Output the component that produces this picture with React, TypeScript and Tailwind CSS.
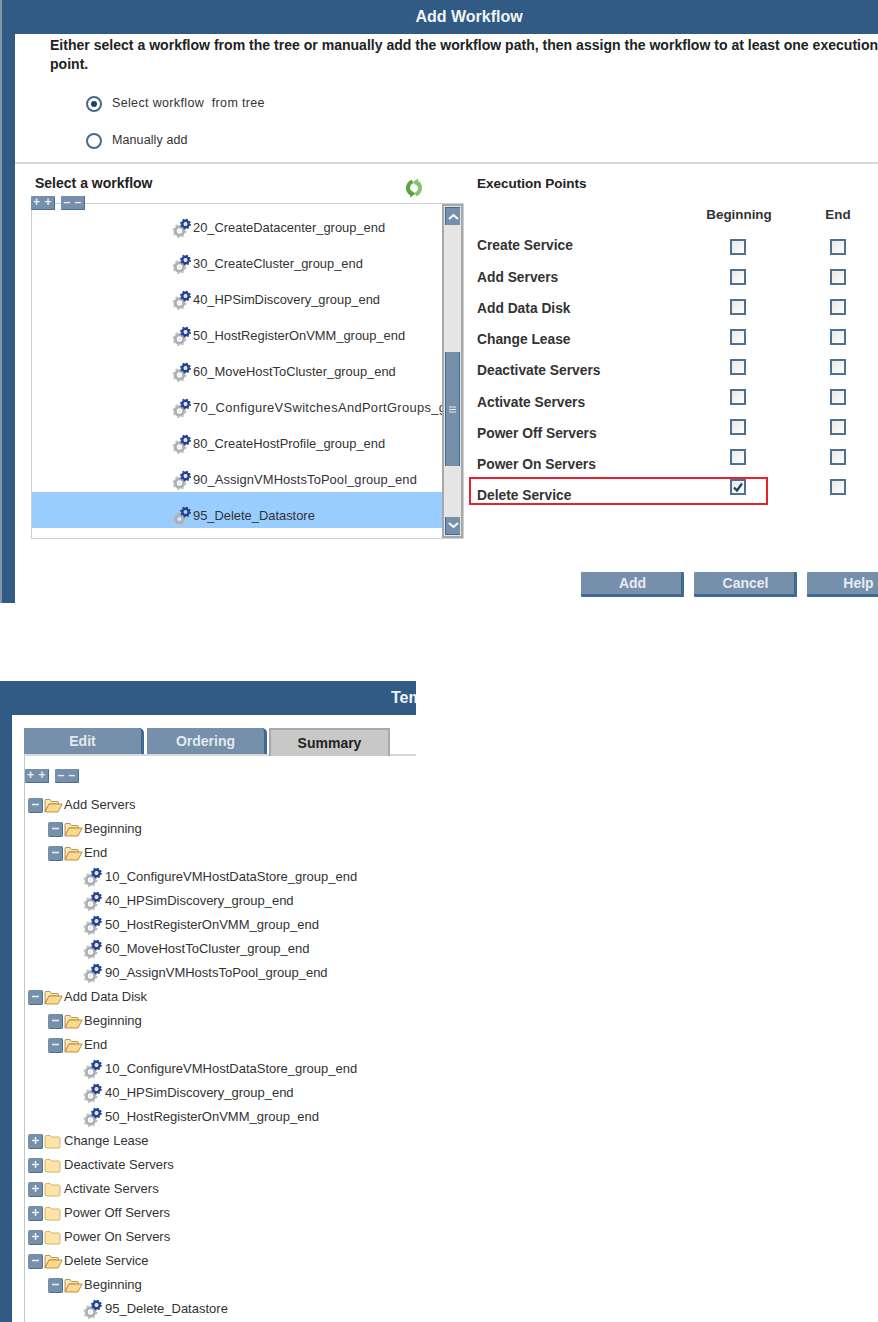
import React from "react";

const workflows = [
  "20_CreateDatacenter_group_end",
  "30_CreateCluster_group_end",
  "40_HPSimDiscovery_group_end",
  "50_HostRegisterOnVMM_group_end",
  "60_MoveHostToCluster_group_end",
  "70_ConfigureVSwitchesAndPortGroups_group_end",
  "80_CreateHostProfile_group_end",
  "90_AssignVMHostsToPool_group_end",
  "95_Delete_Datastore",
];

const points = [
  "Create Service",
  "Add Servers",
  "Add Data Disk",
  "Change Lease",
  "Deactivate Servers",
  "Activate Servers",
  "Power Off Servers",
  "Power On Servers",
  "Delete Service",
];

type TreeRow = { kind: "open" | "closed" | "leaf"; level: 0 | 1 | 2; label: string };
const tree: TreeRow[] = [
  { kind: "open", level: 0, label: "Add Servers" },
  { kind: "open", level: 1, label: "Beginning" },
  { kind: "open", level: 1, label: "End" },
  { kind: "leaf", level: 2, label: "10_ConfigureVMHostDataStore_group_end" },
  { kind: "leaf", level: 2, label: "40_HPSimDiscovery_group_end" },
  { kind: "leaf", level: 2, label: "50_HostRegisterOnVMM_group_end" },
  { kind: "leaf", level: 2, label: "60_MoveHostToCluster_group_end" },
  { kind: "leaf", level: 2, label: "90_AssignVMHostsToPool_group_end" },
  { kind: "open", level: 0, label: "Add Data Disk" },
  { kind: "open", level: 1, label: "Beginning" },
  { kind: "open", level: 1, label: "End" },
  { kind: "leaf", level: 2, label: "10_ConfigureVMHostDataStore_group_end" },
  { kind: "leaf", level: 2, label: "40_HPSimDiscovery_group_end" },
  { kind: "leaf", level: 2, label: "50_HostRegisterOnVMM_group_end" },
  { kind: "closed", level: 0, label: "Change Lease" },
  { kind: "closed", level: 0, label: "Deactivate Servers" },
  { kind: "closed", level: 0, label: "Activate Servers" },
  { kind: "closed", level: 0, label: "Power Off Servers" },
  { kind: "closed", level: 0, label: "Power On Servers" },
  { kind: "open", level: 0, label: "Delete Service" },
  { kind: "open", level: 1, label: "Beginning" },
  { kind: "leaf", level: 2, label: "95_Delete_Datastore" },
];

function Gear() {
  return (
    <svg width="20" height="20" viewBox="0 0 20 20" className="shrink-0">
      <circle cx="7.5" cy="13" r="4.2" fill="none" stroke="#adb0b3" strokeWidth="3" />
      <circle cx="7.5" cy="13" r="6" fill="none" stroke="#bfc1c4" strokeWidth="2" strokeDasharray="2.2 2.5" />
      <circle cx="7.5" cy="13" r="1.6" fill="#eceded" />
      <circle cx="13.5" cy="6" r="3.2" fill="none" stroke="#23408f" strokeWidth="2.4" />
      <circle cx="13.5" cy="6" r="4.6" fill="none" stroke="#23408f" strokeWidth="1.6" strokeDasharray="1.8 1.8" />
      <circle cx="13.5" cy="6" r="1.1" fill="#c8d2ea" />
    </svg>
  );
}

function FolderOpen() {
  return (
    <svg width="19" height="15" viewBox="0 0 19 15" className="shrink-0">
      <path d="M1 13.5V2.5Q1 1.5 2 1.5H6L7.5 3.5H13.5Q14.5 3.5 14.5 4.5V6H5L1 13.5Z" fill="#fbe6ad" stroke="#b08a42" strokeWidth="0.9" />
      <path d="M1 14L5 6H18.2L14 14H1Z" fill="#fdd98c" stroke="#b08a42" strokeWidth="0.9" />
    </svg>
  );
}

function FolderClosed() {
  return (
    <svg width="17" height="15" viewBox="0 0 17 15" className="shrink-0">
      <path d="M1 3Q1 1.5 2.5 1.5H6L7.5 3H14.5Q16 3 16 4.5V12.5Q16 14 14.5 14H2.5Q1 14 1 12.5V3Z" fill="#fde3a4" stroke="#cda960" strokeWidth="0.9" />
    </svg>
  );
}

function Toggle({ open }: { open: boolean }) {
  return (
    <span className="w-[15px] h-[15px] shrink-0 rounded-[2px] bg-[#7690ab] border-r border-b border-[#4a6f94] flex items-center justify-center">
      <svg width="9" height="9" viewBox="0 0 9 9">
        <path d={open ? "M1 4.5H8" : "M1 4.5H8M4.5 1V8"} stroke="#e8edf2" strokeWidth="1.6" />
      </svg>
    </span>
  );
}

function ExpandButtons() {
  return (
    <div className="flex gap-[6px]">
      {["+ +", "– –"].map((s) => (
        <span
          key={s}
          className="w-[24px] h-[14px] rounded-[1px] bg-[#7690ab] border-r border-b border-[#4a6f94] text-[#e8edf2] text-[12px] font-bold leading-[12px] tracking-[0.5px] text-center"
        >
          {s}
        </span>
      ))}
    </div>
  );
}

function Refresh() {
  return (
    <svg width="20" height="20" viewBox="0 0 20 20">
      <path d="M8.5 3.5A7 7 0 0 0 6.5 15.5" fill="none" stroke="#58a63e" strokeWidth="3.8" />
      <path d="M6 11.5V19.5L11.5 15.8Z" fill="#58a63e" />
      <path d="M11.5 16.5A7 7 0 0 0 13.5 4.5" fill="none" stroke="#86c46a" strokeWidth="3.8" />
      <path d="M14 8.5V0.5L8.5 4.2Z" fill="#86c46a" />
    </svg>
  );
}

function Radio({ checked }: { checked?: boolean }) {
  return (
    <span className="w-[16px] h-[16px] rounded-full border-2 border-[#48698c] bg-white flex items-center justify-center shrink-0">
      {checked && <span className="w-[6px] h-[6px] rounded-full bg-[#1f3f66]" />}
    </span>
  );
}

function Checkbox({ checked }: { checked?: boolean }) {
  return (
    <span className="w-[16px] h-[16px] shrink-0 border-2 border-[#4f6f90] bg-gradient-to-br from-[#e8e8e8] to-white flex items-center justify-center">
      {checked && (
        <svg width="12" height="12" viewBox="0 0 12 12">
          <path d="M2 6.5L5 9.5L10 2.5" fill="none" stroke="#1d3f66" strokeWidth="2.2" />
        </svg>
      )}
    </span>
  );
}

function ActionButton({ label }: { label: string }) {
  return (
    <span className="w-[103px] h-[25px] shrink-0 pl-[3px] pt-[1px] bg-[#7690ab] border-r-[3px] border-b-[3px] border-[#3f6a93] rounded-[1px] text-[#e6ebf0] text-[14px] font-bold flex items-center justify-center">
      {label}
    </span>
  );
}

function Scrollbar() {
  return (
    <div className="w-[21px] shrink-0 border-2 border-[#a8a8a8] bg-[#e5e5e5] flex flex-col px-[1px] py-[1px]">
      <span className="h-[18px] bg-[#7690ab] border-t border-l border-[#3f6a93] flex items-center justify-center">
        <svg width="11" height="7" viewBox="0 0 11 7"><path d="M1 6L5.5 2L10 6" fill="none" stroke="#fff" strokeWidth="2" /></svg>
      </span>
      <div className="h-[127px]" />
      <div className="h-[114px] bg-[#7690ab] border-l border-r border-[#3f6a93] flex items-center justify-center">
        <svg width="9" height="7" viewBox="0 0 9 7"><path d="M1 1H8M1 3.5H8M1 6H8" stroke="#e8edf2" strokeWidth="1" /></svg>
      </div>
      <div className="flex-1" />
      <span className="h-[18px] bg-[#7690ab] border-b border-l border-[#3f6a93] flex items-center justify-center">
        <svg width="11" height="7" viewBox="0 0 11 7"><path d="M1 1L5.5 5L10 1" fill="none" stroke="#fff" strokeWidth="2" /></svg>
      </span>
    </div>
  );
}

function AddWorkflow() {
  return (
    <section className="h-[603px] w-[878px] overflow-hidden bg-[#315b84] border-l-2 border-[#8496a8] shrink-0">
      <h1 className="w-[934px] h-[34px] flex items-center justify-center text-[16px] font-bold text-[#f2f4f6]">
        Add Workflow
      </h1>
      <div className="ml-[13px] h-[569px] w-[900px] bg-white text-[#222]">
        <p className="pl-[35px] pt-[2px] text-[14.05px] font-bold leading-[19px] whitespace-nowrap">
          Either select a workflow from the tree or manually add the workflow path, then assign the workflow to at least one execution
          <br />
          point.
        </p>
        <div className="pl-[71px] pt-[20px] flex flex-col gap-[17px] h-[88px] text-[12.5px] text-[#333] tracking-[0.1px]">
          <label className="flex items-center gap-[10px] h-[20px]"><Radio checked /><span className="-mt-[1px] tracking-[0.35px]">Select workflow{"\u00a0\u00a0"}from tree</span></label>
          <label className="flex items-center gap-[10px] h-[20px]"><Radio /><span className="-mt-[1px]">Manually add</span></label>
        </div>
        <div className="h-[2px] bg-[#d5dadd]" />
        <div className="flex">
          <div className="ml-[16px] w-[433px] shrink-0">
            <div className="flex justify-between items-start h-[32px] pl-[4px] pr-[40px]">
              <span className="pt-[10px] text-[14px] font-bold leading-[18px]">Select a workflow</span>
              <span className="pt-[14px]"><Refresh /></span>
            </div>
            <div className="relative z-10 h-[7px]"><ExpandButtons /></div>
            <div className="h-[336px] border border-[#cfcfcf] flex">
              <div className="flex-1 min-w-0 overflow-hidden">
                {workflows.map((w, i) => (
                  <div
                    key={w}
                    className={`h-[36px] pt-[12px] pl-[140px] flex items-center gap-[1px] whitespace-nowrap text-[12.9px] text-[#333] ${i === 8 ? "bg-[#99ccff]" : ""}`}
                  >
                    <Gear />
                    <span className={i === 5 ? "tracking-[0.35px]" : i === 7 ? "tracking-[0.1px]" : ""}>{w}</span>
                  </div>
                ))}
              </div>
              <Scrollbar />
            </div>
          </div>
          <div className="relative ml-[13px] flex-1">
            <div className="pt-[11px] h-[28px] text-[13.5px] font-bold leading-[18px]">Execution Points</div>
            <div className="flex">
              <div className="w-[223px] shrink-0 pt-[39px] font-bold text-[13.8px] text-[#333]">
                {points.map((p) => (
                  <div key={p} className="h-[31.25px] flex items-center">{p}</div>
                ))}
              </div>
              <div className="w-[78px] shrink-0 pt-[14px] flex flex-col items-center">
                <div className="h-[18px] font-bold text-[13.4px] leading-[18px] text-[#333] mb-[15px]">Beginning</div>
                <div className="flex flex-col gap-[14px] -ml-[2px]">
                  {points.map((p, i) => <Checkbox key={p} checked={i === 8} />)}
                </div>
              </div>
              <div className="ml-[21px] w-[78px] shrink-0 pt-[14px] flex flex-col items-center">
                <div className="h-[18px] font-bold text-[13.4px] leading-[18px] text-[#333] mb-[15px]">End</div>
                <div className="flex flex-col gap-[14px]">
                  {points.map((p) => <Checkbox key={p} />)}
                </div>
              </div>
            </div>
            <div className="absolute left-[-8px] top-[313px] w-[299px] h-[28px] border-2 border-[#e8202f]" />
          </div>
        </div>
        <div className="ml-[566px] mt-[33px] flex gap-[10px]">
          <ActionButton label="Add" />
          <ActionButton label="Cancel" />
          <ActionButton label="Help" />
        </div>
      </div>
    </section>
  );
}

function Template() {
  return (
    <section className="mt-[78px] w-[416px] h-[641px] overflow-hidden bg-[#315b84] shrink-0">
      <h2 className="h-[34px] w-[800px] pl-[391px] flex items-center text-[16px] font-bold text-[#f2f4f6]">Template</h2>
      <div className="ml-[12px] h-[607px] bg-white pt-[13px] pl-[12px]">
        <div className="flex items-start h-[28px] border-b-2 border-[#d5dadd] gap-[3px]">
          <span className="w-[120px] h-[26px] bg-[#7690ab] border-r-[3px] border-[#3f6a93] rounded-tr-[5px] text-[#e2e8ee] text-[14px] font-bold flex items-center justify-center">Edit</span>
          <span className="w-[120px] h-[26px] bg-[#7690ab] border-r-[3px] border-[#3f6a93] rounded-tr-[5px] text-[#e2e8ee] text-[14px] font-bold flex items-center justify-center">Ordering</span>
          <span className="-ml-[1px] w-[121px] h-[28px] bg-[#c8c8c8] border-2 border-b-0 border-[#a9a9a9] text-[#222] text-[14px] font-bold flex items-center justify-center">Summary</span>
        </div>
        <div className="border-l border-[#c4c4c4] h-[566px] text-[13px] text-[#333] overflow-hidden">
          <div className="pt-[13px] h-[37px]"><ExpandButtons /></div>
          {tree.map((r, i) => (
            <div
              key={i}
              className={`h-[24px] flex items-center whitespace-nowrap ${
                r.level === 0 ? "pl-[3px]" : r.level === 1 ? "pl-[23px]" : "pl-[58px]"
              }`}
            >
              {r.kind === "leaf" ? (
                <span className="flex items-center gap-[2px]"><Gear /><span>{r.label}</span></span>
              ) : (
                <span className="flex items-center gap-[1px]">
                  <Toggle open={r.kind === "open"} />
                  {r.kind === "open" ? <FolderOpen /> : <FolderClosed />}
                  <span className={r.kind === "closed" ? "ml-[2px]" : ""}>{r.label}</span>
                </span>
              )}
            </div>
          ))}
        </div>
      </div>
    </section>
  );
}

export default function App() {
  return (
    <div className="w-[878px] h-[1322px] overflow-hidden bg-white flex flex-col [font-family:'Liberation_Sans',Arial,sans-serif]">
      <AddWorkflow />
      <Template />
    </div>
  );
}
